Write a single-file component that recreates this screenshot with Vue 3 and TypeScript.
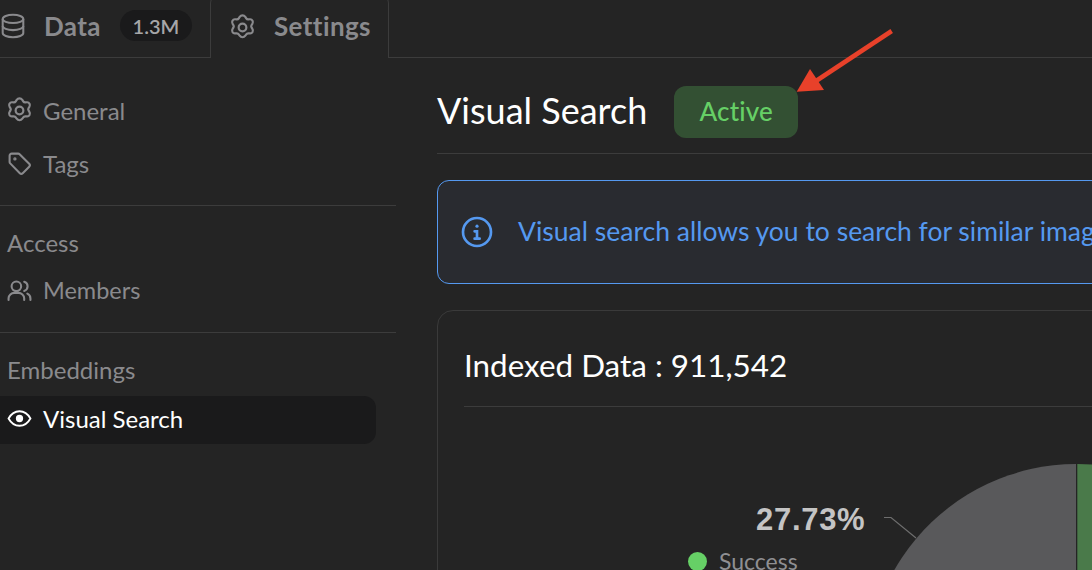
<script setup lang="ts">
const gear =
  'M12 2.6c.9 0 1.7.5 2.2 1.2l.7 1.1c.3.5.9.8 1.5.8l1.3-.1c.9-.1 1.7.4 2.1 1.1.4.8.4 1.7-.1 2.4l-.7 1.2c-.3.5-.3 1.1 0 1.6l.7 1.2c.5.7.5 1.6.1 2.4-.4.7-1.2 1.2-2.1 1.1l-1.3-.1c-.6 0-1.2.3-1.5.8l-.7 1.1c-.5.7-1.3 1.2-2.2 1.2s-1.7-.5-2.2-1.2l-.7-1.1c-.3-.5-.9-.8-1.5-.8l-1.3.1c-.9.1-1.7-.4-2.1-1.1-.4-.8-.4-1.7.1-2.4l.7-1.2c.3-.5.3-1.1 0-1.6l-.7-1.2c-.5-.7-.5-1.6-.1-2.4.4-.7 1.2-1.2 2.1-1.1l1.3.1c.6 0 1.2-.3 1.5-.8l.7-1.1c.5-.7 1.3-1.2 2.2-1.2z'
const sideItemsTop = ['General', 'Tags']
</script>

<template>
  <div class="page">
    <header class="tabs">
      <div class="tab tab-data">
        <svg class="ico-tab" viewBox="0 0 24 24" fill="none" stroke="currentColor" stroke-width="1.9">
          <ellipse cx="12" cy="5.500" rx="9.500" ry="3.800" />
          <path d="M2.500 5.500v13c0 2.100 4.200 3.800 9.500 3.800s9.500-1.700 9.500-3.800v-13" />
          <path d="M2.500 12c0 2.100 4.200 3.800 9.500 3.800s9.500-1.700 9.500-3.800" />
        </svg>
        <span class="tab-label">Data</span>
        <span class="count">1.3M</span>
      </div>
      <div class="tab tab-settings">
        <svg class="ico-gear" viewBox="1.500 1.500 21 21" fill="none" stroke="currentColor" stroke-width="1.700">
          <path :d="gear" />
          <circle cx="12" cy="12" r="3" />
        </svg>
        <span class="tab-label">Settings</span>
      </div>
    </header>

    <div class="body">
      <aside class="side">
        <section class="group group-first">
          <div v-for="name in sideItemsTop" :key="name" class="item">
            <svg v-if="name === 'General'" class="ico-gear ico-gear-side" viewBox="1.500 1.500 21 21" fill="none" stroke="currentColor" stroke-width="1.700">
              <path :d="gear" />
              <circle cx="12" cy="12" r="3" />
            </svg>
            <svg v-else class="ico" viewBox="0 0 24 24" fill="none" stroke="currentColor" stroke-width="2" stroke-linejoin="round">
              <path d="M2.500 4.500a2 2 0 0 1 2-2h6.200a2 2 0 0 1 1.400.600l9.200 9.200a2 2 0 0 1 0 2.800l-6.200 6.200a2 2 0 0 1-2.800 0L3.100 11.900a2 2 0 0 1-.600-1.400z" />
              <circle cx="7.600" cy="7.600" r=".600" />
            </svg>
            <span>{{ name }}</span>
          </div>
        </section>
        <section class="group">
          <div class="group-title">Access</div>
          <div class="item">
            <svg class="ico" viewBox="0 0 24 24" fill="none" stroke="currentColor" stroke-width="2" stroke-linecap="round">
              <circle cx="9" cy="8" r="4.600" />
              <path d="M1.500 21v-1.500c0-3 2.600-5.200 5.600-5.200h3.800c3 0 5.600 2.200 5.600 5.200V21" />
              <path d="M16.500 3.600a4.600 4.600 0 0 1 0 8.800" />
              <path d="M19.500 15c1.900.800 3 2.500 3 4.600V21" />
            </svg>
            <span class="members">Members</span>
          </div>
        </section>
        <section class="group group-last">
          <div class="group-title">Embeddings</div>
          <div class="item item-active">
            <svg class="ico" viewBox="0 0 24 24" fill="none" stroke="currentColor" stroke-width="1.800">
              <path d="M1.500 12C4 7.500 7.600 5 12 5s8 2.500 10.500 7c-2.500 4.500-6.100 7-10.500 7S4 16.500 1.500 12z" />
              <circle cx="12" cy="12" r="2.600" fill="currentColor" />
            </svg>
            <span>Visual Search</span>
          </div>
        </section>
      </aside>

      <main class="main">
        <div class="title-row">
          <h1 class="title">Visual Search</h1>
          <span class="status">Active</span>
        </div>

        <div class="alert">
          <svg class="alert-ico" viewBox="0 0 24 24" fill="none" stroke="currentColor" stroke-width="2" stroke-linecap="round">
            <circle cx="12" cy="12" r="10.500" />
            <circle cx="12" cy="7.600" r="1.200" fill="currentColor" stroke="none" />
            <path d="M10.200 11.500H12v5.500M10.200 17h3.800" />
          </svg>
          <span class="alert-text">Visual search allows you to search for similar imag</span>
        </div>

        <section class="card">
          <h2 class="card-title">Indexed Data : 911,542</h2>
          <div class="chart">
            <svg class="pie" viewBox="0 0 656 164" fill="none">
              <path d="M612 267 L612 57 A210 210 0 0 0 405.800 302.700 Z" fill="#59595b" />
              <path d="M613.300 57 A210 210 0 0 1 823.300 267 L613.300 267 Z" fill="#4a7a4a" />
              <path d="M420 110.500h7l25 20.500" stroke="#6e6e6e" stroke-width="1.200" />
            </svg>
            <div class="pct">27.73%</div>
            <div class="legend"><i class="dot"></i><span>Success</span></div>
          </div>
        </section>

        <svg class="arrow" viewBox="0 0 120 80" fill="none">
          <path d="M111.700 11 L36 61" stroke="#e8412a" stroke-width="4.500" />
          <path d="M16.700 71.700 L30 49 L44 70 Z" fill="#e8412a" />
        </svg>
      </main>
    </div>
  </div>
</template>

<style>
html, body { margin: 0; background: #242424; overflow: hidden; }
</style>

<style scoped>
.page {
  width: 1092px;
  height: 570px;
  overflow: hidden;
  background: #242424;
  font-family: "Lato", "Noto Sans", sans-serif;
  color: #8a8a8d;
}
.tabs {
  height: 58px;
  box-sizing: border-box;
  display: flex;
  border-bottom: 1px solid #3c3c3c;
}
.tab {
  display: flex;
  align-items: center;
  height: 58px;
  box-sizing: border-box;
  padding-bottom: 7px;
  font-weight: 700;
}
.tab-data { width: 210px; }
.tab-data .tab-label { margin-left: 18px; }
.tab-settings {
  width: 179px;
  height: 66px;
  margin-top: -8px;
  padding: 8px 0 5px 18px;
  background: #242424;
  border: 1px solid #3c3c3c;
  border-bottom: 0;
  border-radius: 12px 12px 0 0;
}
.tab-settings .tab-label { margin-left: 18px; margin-bottom: 2px; }
.ico-tab { width: 26px; height: 26px; flex: none; }
.ico-gear { width: 27px; height: 27px; flex: none; }
.ico-gear-side { margin: 0 -1px; }
.tab-label { font-size: 26px; letter-spacing: .4px; }
.count {
  margin-left: 19px;
  width: 72px;
  height: 31px;
  border-radius: 16px;
  background: #1a1a1b;
  color: #a6a6a8;
  font-size: 20px;
  font-weight: 600;
  display: flex;
  align-items: center;
  justify-content: center;
}
.body { display: flex; }
.side { width: 396px; flex: none; }
.group { border-bottom: 1px solid #3c3c3c; padding: 20px 0 15px 7px; }
.group-first { padding: 26px 0 15px 7px; }
.group-last { border-bottom: 0; padding-bottom: 0; }
.group-title { font-size: 24px; line-height: 34px; height: 38px; }
.item {
  display: flex;
  align-items: center;
  height: 53px;
  font-size: 24px;
  gap: 11px;
  padding-bottom: 1px;
  box-sizing: border-box;
}
.members { font-size: 23.5px; }
.ico { width: 25px; height: 25px; flex: none; }
.item-active {
  height: 48px;
  margin: 5px 20px 0 -7px;
  padding: 0 0 4px 7px;
  background: #1a1a1b;
  border-radius: 0 12px 12px 0;
  color: #fff;
}
.main { position: relative; flex: none; width: 900px; margin-left: 41px; }
.title-row {
  height: 96px;
  box-sizing: border-box;
  padding-top: 28px;
  display: flex;
  align-items: flex-start;
  gap: 27px;
  border-bottom: 1px solid #3c3c3c;
}
.title { margin: -2px 0 0; font-size: 36px; line-height: 52px; font-weight: 400; color: #fff; white-space: nowrap; }
.status {
  width: 124px;
  height: 52px;
  box-sizing: border-box;
  padding-bottom: 3px;
  border-radius: 12px;
  background: #335033;
  color: #66d066;
  font-size: 26px;
  font-weight: 500;
  letter-spacing: .2px;
  display: flex;
  align-items: center;
  justify-content: center;
}
.alert {
  margin-top: 26px;
  height: 104px;
  box-sizing: border-box;
  display: flex;
  align-items: center;
  gap: 25px;
  padding-left: 23px;
  background: #292b30;
  border: 1px solid #5599f0;
  border-radius: 12px;
  color: #5599f0;
  white-space: nowrap;
  overflow: hidden;
}
.alert-ico { width: 32px; height: 32px; flex: none; }
.alert-text { font-size: 26.500px; padding-bottom: 3px; }
.card {
  margin-top: 26px;
  height: 300px;
  box-sizing: border-box;
  padding: 0 26px;
  border: 1px solid #3a3a3a;
  border-radius: 16px;
}
.card-title {
  margin: 0;
  height: 96px;
  box-sizing: border-box;
  padding-top: 32px;
  font-size: 31.400px;
  line-height: 44px;
  font-weight: 400;
  color: #fff;
  border-bottom: 1px solid #3c3c3c;
}
.chart { position: relative; height: 164px; }
.pie { position: absolute; left: 0; top: 0; width: 656px; height: 164px; overflow: hidden; }
.pct {
  position: absolute;
  left: 292px;
  top: 95px;
  font: 700 31px/36px "Liberation Sans", sans-serif;
  letter-spacing: .7px;
  color: #c4c4c4;
}
.legend {
  position: absolute;
  left: 224px;
  top: 141px;
  display: flex;
  align-items: center;
  gap: 12px;
  font-size: 23px;
  line-height: 26px;
  color: #8f8f92;
}
.dot { width: 19px; height: 19px; border-radius: 50%; background: #66d066; }
.arrow { position: absolute; left: 343px; top: -38px; width: 120px; height: 80px; }
</style>
